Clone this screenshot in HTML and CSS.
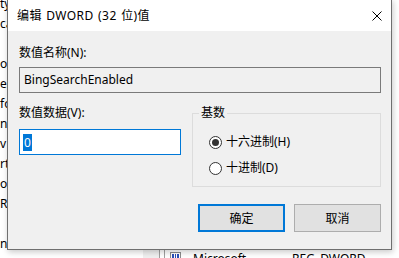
FILE: index.html
```html
<!DOCTYPE html>
<html lang="zh-CN">
<head>
<meta charset="utf-8">
<title>编辑 DWORD (32 位)值</title>
<link rel="stylesheet" href="styles.css">
</head>
<body>
<div class="screen">
  <div class="regedit">
    <div class="tree">
      <div class="tree-line">ty</div>
      <div class="tree-line">ca</div>
      <div class="tree-line"></div>
      <div class="tree-line">or</div>
      <div class="tree-line">es</div>
      <div class="tree-line">fo</div>
      <div class="tree-line">n</div>
      <div class="tree-line">v</div>
      <div class="tree-line">rt</div>
      <div class="tree-line">o</div>
      <div class="tree-line">R</div>
      <div class="tree-line"></div>
      <div class="tree-line">nd</div>
    </div>
    <div class="splitter"></div>
    <div class="list">
      <div class="list-inner">
        <div class="list-row">
          <svg class="reg-icon" width="12" height="14" viewBox="0 0 12 14">
            <rect x="0.5" y="0.5" width="10" height="13" fill="#fff" stroke="#8c8c8c"/>
            <rect x="2" y="2" width="2" height="4" fill="#2a4fb8"/>
            <rect x="5" y="2" width="1" height="4" fill="#2a4fb8"/>
            <rect x="7" y="2" width="2" height="4" fill="#2a4fb8"/>
            <rect x="2" y="8" width="1" height="4" fill="#2a4fb8"/>
            <rect x="4" y="8" width="2" height="4" fill="#2a4fb8"/>
            <rect x="7" y="8" width="2" height="4" fill="#2a4fb8"/>
          </svg>
          <span class="col-name">Microsoft</span>
          <span class="col-type">REG_DWORD</span>
        </div>
      </div>
    </div>
  </div>

  <div class="dialog">
    <div class="titlebar">
      <span class="title">编辑 DWORD (32 位)值</span>
      <svg class="close" width="10" height="10" viewBox="0 0 10 10">
        <path d="M0.5 0.5 L9.5 9.5 M9.5 0.5 L0.5 9.5" stroke="#000" stroke-width="1" fill="none"/>
      </svg>
    </div>
    <div class="dialog-body">
      <div class="field-label">数值名称(N):</div>
      <div class="textbox readonly">BingSearchEnabled</div>
      <div class="data-row">
        <div class="data-col">
          <div class="field-label data-label">数值数据(V):</div>
          <div class="textbox focused"><span class="sel">0</span></div>
        </div>
        <fieldset class="base-group">
          <legend>基数</legend>
          <div class="radio-row"><span class="radio checked"></span><span class="radio-text">十六进制(H)</span></div>
          <div class="radio-row second"><span class="radio"></span><span class="radio-text">十进制(D)</span></div>
        </fieldset>
      </div>
      <div class="button-row">
        <button class="btn default">确定</button>
        <button class="btn">取消</button>
      </div>
    </div>
  </div>
</div>
</body>
</html>
```

FILE: styles.css
```css
html, body {
  margin: 0;
  padding: 0;
}

body {
  width: 399px;
  height: 258px;
  overflow: hidden;
  background: #ffffff;
  font-family: "Noto Sans", "Noto Sans CJK SC", sans-serif;
  font-size: 12px;
  color: #000;
}

.screen {
  position: relative;
  width: 399px;
  height: 258px;
  overflow: hidden;
}

/* background registry editor */
.regedit {
  display: flex;
  height: 258px;
}

.tree {
  width: 143px;
  margin-top: -6px;
  background: #fff;
}

.tree-line {
  height: 20px;
  line-height: 20px;
  white-space: nowrap;
}

.splitter {
  width: 16px;
  background: #f0f0f0;
  border-right: 1px solid #a0a0a0;
}

.list {
  flex: 1;
  padding-left: 4px;
  background: #fff;
}

.list-inner {
  height: 100%;
  border-left: 1px solid #a0a0a0;
  padding-top: 249px;
  box-sizing: border-box;
}

.list-row {
  display: flex;
  align-items: flex-start;
  height: 20px;
  line-height: 20px;
  padding-left: 5px;
  white-space: nowrap;
}

.reg-icon {
  margin-top: 3px;
  flex: none;
}

.col-name {
  margin-left: 11px;
  width: 99px;
}

/* dialog window */
.dialog {
  position: absolute;
  left: 7px;
  top: -1px;
  width: 383px;
  border: 1px solid #6f6f6f;
  background: #f0f0f0;
  box-shadow: 1px 2px 6px rgba(0, 0, 0, 0.22);
}

.titlebar {
  height: 31px;
  background: #fff;
  display: flex;
  align-items: center;
  padding-left: 9px;
  padding-right: 9px;
}

.title {
  line-height: 16px;
  white-space: nowrap;
  letter-spacing: 0.4px;
  word-spacing: 1px;
}

.close {
  margin-left: auto;
  display: block;
}

.dialog-body {
  padding: 14px 10px 17px 11px;
}

.field-label {
  line-height: 16px;
  height: 16px;
  margin-bottom: 6px;
  white-space: nowrap;
}

.data-label {
  margin-bottom: 8px;
}

.textbox {
  box-sizing: border-box;
  height: 26px;
  border: 1px solid #7a7a7a;
  display: flex;
  align-items: center;
  padding: 0 4px;
  line-height: 16px;
  white-space: nowrap;
}

.textbox.readonly {
  background: #f0f0f0;
}

.textbox.focused {
  background: #fff;
  border-color: #0078d7;
  padding-left: 3px;
}

.sel {
  display: inline-block;
  background: #0078d7;
  color: #fff;
  line-height: 17px;
  height: 17px;
  padding: 0 1px;
}

.data-row {
  display: flex;
  align-items: flex-start;
  margin-top: 12px;
}

.data-col {
  width: 162px;
  flex: none;
}

.base-group {
  box-sizing: border-box;
  width: 189px;
  margin: 0 0 0 11px;
  padding: 13px 6px 10px 6px;
  border: 1px solid #dcdcdc;
  min-width: 0;
}

.base-group legend {
  padding: 0 2px;
  line-height: 16px;
  height: 16px;
}

.radio-row {
  display: flex;
  align-items: center;
  height: 16px;
  line-height: 16px;
  margin-left: 10px;
  white-space: nowrap;
}

.radio-row.second {
  margin-top: 10px;
}

.radio {
  box-sizing: border-box;
  width: 13px;
  height: 13px;
  border: 1px solid #333;
  border-radius: 50%;
  background: #fff;
  display: flex;
  align-items: center;
  justify-content: center;
  flex: none;
}

.radio.checked::after {
  content: "";
  width: 7px;
  height: 7px;
  border-radius: 50%;
  background: #333;
}

.radio-text {
  margin-left: 4px;
}

.button-row {
  display: flex;
  justify-content: flex-end;
  gap: 9px;
  margin-top: 17px;
}

.btn {
  box-sizing: border-box;
  width: 87px;
  height: 28px;
  background: #e1e1e1;
  border: 1px solid #adadad;
  font-family: "Noto Sans", "Noto Sans CJK SC", sans-serif;
  font-size: 12px;
  color: #000;
  padding: 0;
  margin: 0;
}

.btn.default {
  border: 2px solid #0078d7;
}
```
